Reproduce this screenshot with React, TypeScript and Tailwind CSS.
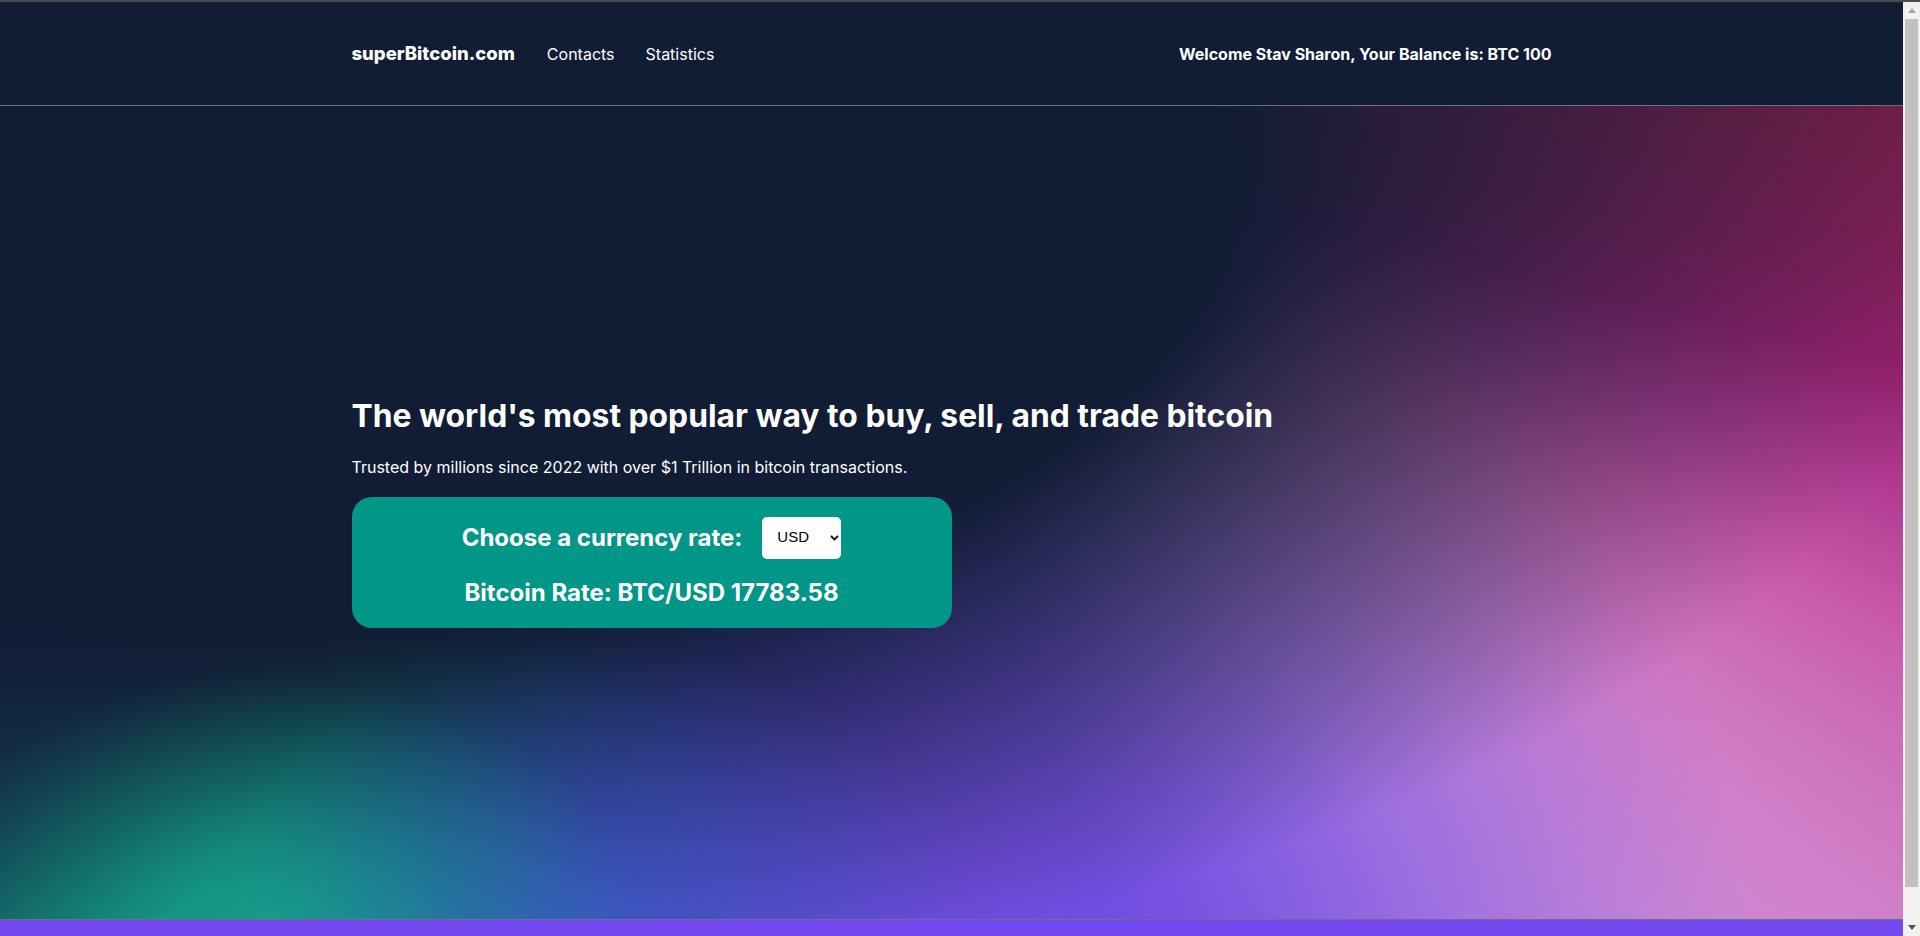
import { useState } from "react";

const rates: Record<string, string> = {
  USD: "17783.58",
  EUR: "16812.40",
  ILS: "61955.12",
};

function Scrollbar() {
  return (
    <div className="flex w-[17px] shrink-0 flex-col bg-[#f1f1f1]">
      <div className="flex h-[17px] items-center justify-center">
        <svg width="8" height="5" viewBox="0 0 8 5">
          <path d="M0 5L4 0l4 5z" fill="#a3a3a3" />
        </svg>
      </div>
      <div className="mx-auto h-[868px] w-[13px] bg-[#c1c1c1]" />
      <div className="flex-1" />
      <div className="flex h-[17px] items-center justify-center">
        <svg width="8" height="5" viewBox="0 0 8 5">
          <path d="M0 0h8L4 5z" fill="#505050" />
        </svg>
      </div>
    </div>
  );
}

export default function App() {
  const [currency, setCurrency] = useState("USD");

  return (
    <div className="flex h-[936px] flex-col overflow-hidden font-['Inter',sans-serif] text-white">
      {/* thin grey strip on top */}
      <div className="h-[2px] shrink-0 bg-[#4b4b4b]" />

      <div className="flex min-h-0 flex-1">
        <div className="min-w-0 flex-1 overflow-hidden">
          {/* Navbar */}
          <header className="h-[104px] border-b border-gray-500 bg-[#111c35]">
            <div className="mx-auto flex h-full max-w-[1200px] items-center justify-between">
              <div className="flex items-center gap-8">
                <span className="text-[18.5px] font-extrabold">superBitcoin.com</span>
                <nav className="flex items-center gap-[31px] text-base">
                  <a href="#">Contacts</a>
                  <a href="#">Statistics</a>
                </nav>
              </div>
              <p className="text-base font-bold">Welcome Stav Sharon, Your Balance is: BTC 100</p>
            </div>
          </header>

          {/* Hero */}
          <section className="flex h-[814px] items-center border-b border-gray-500 bg-[radial-gradient(ellipse_19%_30%_at_14%_100%,rgba(20,166,140,0.8)_0%,rgba(20,160,138,0.3)_55%,rgba(20,160,138,0)_100%),radial-gradient(ellipse_20%_34%_at_31%_100%,rgba(45,105,200,0.5)_0%,rgba(45,105,200,0)_100%),radial-gradient(ellipse_90%_100%_at_15%_10%,#111c35_55%,rgba(17,28,53,0)_100%),radial-gradient(ellipse_34%_70%_at_58%_100%,rgba(104,70,222,0.75)_0%,rgba(104,70,222,0.35)_55%,rgba(104,70,222,0)_100%),conic-gradient(from_90deg_at_45%_0%,#7a1f4a_0deg,#8a1f5a_8deg,#9a2070_14deg,#b03a90_20deg,#c857a8_26deg,#cc6cb8_31deg,#d080c8_38deg,#cc8ad6_46deg,#c28ae0_53deg,#aa7ce8_62deg,#8a60e8_73deg,#6a48e0_96deg,#4a50d0_110deg,#2a78b0_121deg,#14a08a_130deg,#15505d_140deg,#15284a_155deg,#111c35_175deg,#111c35_360deg)]">
            <div className="mx-auto w-full max-w-[1200px]">
              <h1 className="text-[31.8px] leading-9 font-bold">
                The world's most popular way to buy, sell, and trade bitcoin
              </h1>
              <p className="mt-[21px] text-base">
                Trusted by millions since 2022 with over $1 Trillion in bitcoin transactions.
              </p>

              {/* Rate card */}
              <div className="mt-[18px] flex w-[600px] flex-col items-center gap-[18px] rounded-[20px] bg-[#009688] pt-5 pb-[19px]">
                <div className="flex items-center gap-5">
                  <span className="text-2xl font-bold">Choose a currency rate:</span>
                  <div className="relative">
                    <select
                      value={currency}
                      onChange={(e) => setCurrency(e.target.value)}
                      className="h-[42px] w-[79px] appearance-none rounded-[5px] bg-white pl-[15px] font-['Liberation_Sans',Arial,sans-serif] text-[15px] text-black outline-none"
                    >
                      <option value="USD">USD</option>
                      <option value="EUR">EUR</option>
                      <option value="ILS">ILS</option>
                    </select>
                    <svg
                      className="pointer-events-none absolute top-[18px] left-[68px]"
                      width="9"
                      height="6"
                      viewBox="0 0 9 6"
                      fill="none"
                    >
                      <path d="M1 1l3.5 3.5L8 1" stroke="#111" strokeWidth="1.8" />
                    </svg>
                  </div>
                </div>
                <p className="text-2xl font-bold">
                  Bitcoin Rate: BTC/{currency} {rates[currency]}
                </p>
              </div>
            </div>
          </section>

          {/* Footer strip */}
          <footer className="h-[54px] bg-[#7349ef]" />
        </div>
        <Scrollbar />
      </div>
    </div>
  );
}
